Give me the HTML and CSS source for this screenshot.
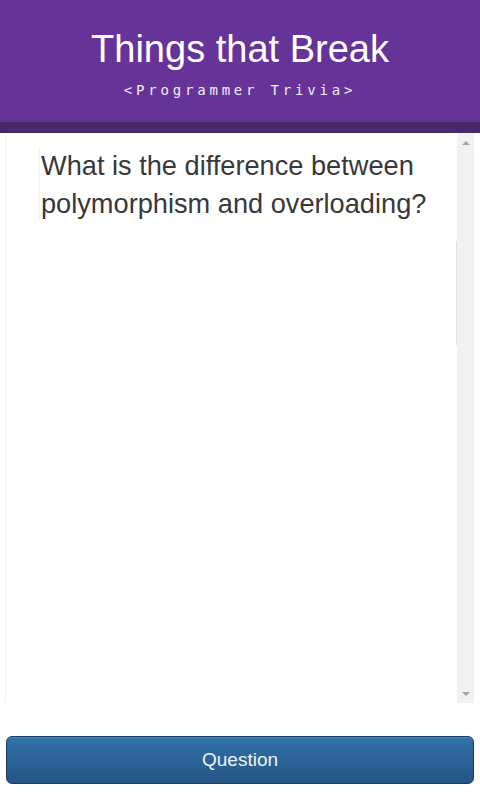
FILE: index.html
```html
<!DOCTYPE html>
<html lang="en">
<head>
<meta charset="utf-8">
<title>Things that Break</title>
<link rel="stylesheet" href="styles.css">
</head>
<body>
  <header class="masthead">
    <h1 class="title">Things that Break</h1>
    <p class="subtitle">&lt;Programmer Trivia&gt;</p>
  </header>
  <main class="panel">
    <div class="panel-content">
      <p class="question">What is the difference between polymorphism and overloading?</p>
      <span class="inner-thumb"></span>
    </div>
    <div class="scrollbar">
      <span class="arrow arrow-up"></span>
      <span class="arrow arrow-down"></span>
    </div>
  </main>
  <button class="action-btn" type="button">Question</button>
</body>
</html>
```

FILE: styles.css
```css
html, body {
  margin: 0;
  padding: 0;
  background: #ffffff;
}

body {
  font-family: "Liberation Sans", Arial, sans-serif;
  width: 480px;
  height: 800px;
  overflow: hidden;
}

.masthead {
  background: #663399;
  border-bottom: 11px solid #48286a;
  text-align: center;
  color: #ffffff;
  padding-top: 27px;
  box-sizing: content-box;
  height: 95px;
}

.title {
  margin: 0;
  font-weight: normal;
  font-size: 38px;
  line-height: 44px;
  color: #ffffff;
}

.subtitle {
  margin: 9px 0 0 0;
  font-family: "DejaVu Sans Mono", "Liberation Mono", monospace;
  font-size: 14px;
  line-height: 20px;
  letter-spacing: 3.8px;
  color: #f4eefa;
}

.panel {
  display: flex;
  height: 570px;
  margin: 0 6px 0 5px;
  border-left: 1px solid #f3f3f3;
}

.panel-content {
  flex: 1;
  display: flex;
  padding: 14px 0 0 33px;
}

.question {
  flex: 1;
  margin: 0;
  align-self: flex-start;
  border-left: 1px solid #eeeeee;
  padding-left: 1px;
  font-size: 27.2px;
  line-height: 38px;
  color: #383838;
  height: 72px;
}

.inner-thumb {
  width: 1px;
  height: 104px;
  margin-top: 94px;
  background: #e2e2e2;
}

.scrollbar {
  width: 17px;
  background: #f1f1f1;
  display: flex;
  flex-direction: column;
  justify-content: space-between;
  align-items: center;
  padding: 8px 0 7px 0;
}

.arrow {
  width: 0;
  height: 0;
  border-left: 4px solid transparent;
  border-right: 4px solid transparent;
}

.arrow-up {
  border-bottom: 4px solid #a3a3a3;
}

.arrow-down {
  border-top: 4px solid #a3a3a3;
}

.action-btn {
  display: block;
  width: 468px;
  height: 48px;
  margin: 33px 6px 0 6px;
  border: 1px solid #1c3b5a;
  border-radius: 6px;
  background: linear-gradient(to bottom, #3171aa, #245684);
  color: #f2f2f2;
  font-family: "Liberation Sans", Arial, sans-serif;
  font-size: 19px;
  padding: 0;
  box-shadow: inset 0 1px 0 rgba(255,255,255,0.15);
}
```
